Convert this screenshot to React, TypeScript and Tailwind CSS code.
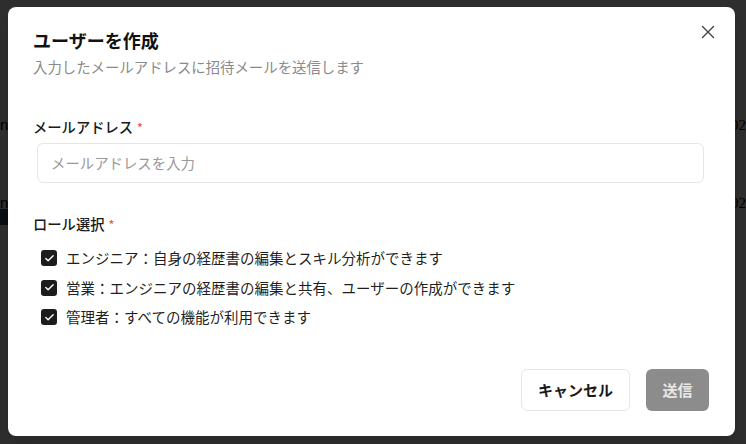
import React from "react";

function Check() {
  return (
    <span className="flex h-[16px] w-[16px] shrink-0 items-center justify-center rounded-[3px] bg-[#1c1c1c]">
      <svg width="11" height="11" viewBox="0 0 24 24" fill="none" stroke="white" strokeWidth="3" strokeLinecap="round" strokeLinejoin="round">
        <path d="M20 6 9 17l-5-5" />
      </svg>
    </span>
  );
}

const roles = [
  "エンジニア：自身の経歴書の編集とスキル分析ができます",
  "営業：エンジニアの経歴書の編集と共有、ユーザーの作成ができます",
  "管理者：すべての機能が利用できます",
];

export default function App() {
  return (
    <div className="relative h-[444px] w-[746px] overflow-hidden bg-white font-['Noto_Sans_CJK_JP','Noto_Sans',sans-serif] text-[#1a1a1a]">
      {/* background page */}
      <div className="flex flex-col pt-[115px]">
        <div className="flex h-[20px] items-center justify-between">
          <span className="font-['Liberation_Sans',sans-serif] text-[15px] leading-[20px] text-black">n</span>
          <span className="font-['Liberation_Serif',serif] text-[15px] leading-[20px] text-black">02</span>
        </div>
        <div className="h-[58px]" />
        <div className="flex h-[20px] items-center justify-between">
          <span className="font-['Liberation_Sans',sans-serif] text-[15px] leading-[20px] text-black">n</span>
          <span className="font-['Liberation_Serif',serif] text-[15px] leading-[20px] text-black">02</span>
        </div>
        <div className="mt-[-4px] h-[16px] w-[8px] bg-[#3b4a6b]" />
      </div>

      {/* overlay */}
      <div className="absolute inset-0 bg-black/[0.82]">
        <div className="relative ml-[8px] mt-[7px] flex h-[429px] w-[727px] flex-col rounded-[8px] bg-white pl-[25px] pr-[26px] pt-[19px] pb-[25px] shadow-lg">
          <button className="absolute right-[16px] top-[14px] flex h-[22px] w-[22px] items-center justify-center text-[#444]">
            <svg width="22" height="22" viewBox="0 0 24 24" fill="none" stroke="currentColor" strokeWidth="1.5" strokeLinecap="round">
              <path d="M18 6 6 18M6 6l12 12" />
            </svg>
          </button>

          <h2 className="text-[18px] font-bold leading-[28px] text-[#111]">ユーザーを作成</h2>
          <p className="mt-[3px] text-[14.4px] leading-[20px] text-[#8a8a8a]">入力したメールアドレスに招待メールを送信します</p>

          <div className="mt-[40px] flex items-center text-[14.3px] font-medium leading-[20px] text-[#1a1a1a]">
            メールアドレス<span className="ml-[4px] text-[12px] text-[#e05a5a]">*</span>
          </div>
          <div className="ml-[4px] mt-[6px] flex h-[40px] w-[667px] items-center rounded-[6px] border border-[#e6e6e6] px-[13px] text-[14.4px] text-[#9a9a9a]">
            メールアドレスを入力
          </div>

          <div className="mt-[31px] flex items-center text-[14.3px] font-medium leading-[20px] text-[#1a1a1a]">
            ロール選択<span className="ml-[4px] text-[12px] text-[#e05a5a]">*</span>
          </div>
          <div className="ml-[8px] mt-[14px] flex flex-col gap-[9.5px]">
            {roles.map((r) => (
              <div key={r} className="flex h-[20px] items-center gap-[9px] text-[14.5px] text-[#1f1f1f]">
                <Check />
                <span>{r}</span>
              </div>
            ))}
          </div>

          <div className="mt-auto flex justify-end gap-[16px]">
            <button className="flex h-[42px] w-[109px] items-center justify-center rounded-[6px] border border-[#e6e6e6] bg-white text-[15px] font-bold text-[#1a1a1a]">
              キャンセル
            </button>
            <button className="flex h-[42px] w-[63px] items-center justify-center rounded-[6px] bg-[#8c8c8c] text-[15px] font-bold text-[#e8e8e8]">
              送信
            </button>
          </div>
        </div>
      </div>
    </div>
  );
}
